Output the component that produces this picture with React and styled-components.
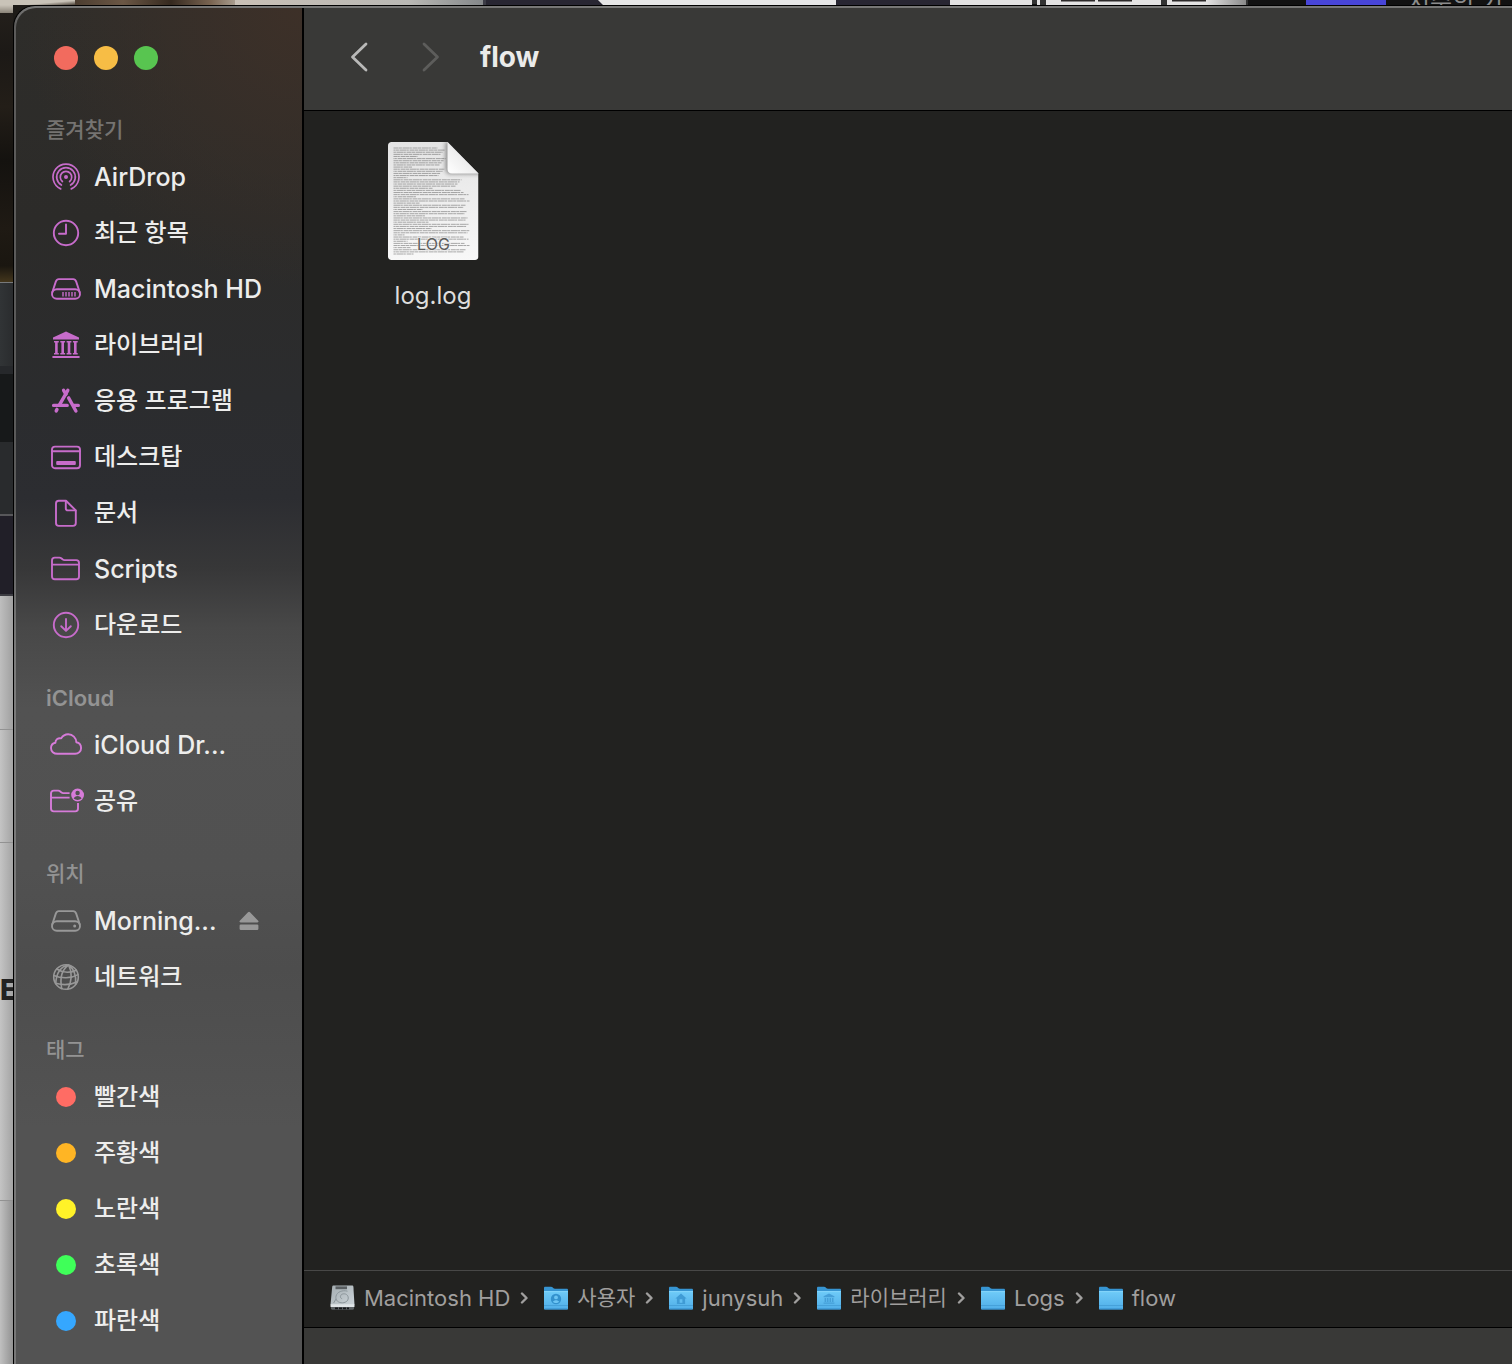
import React from "react";
import styled, { createGlobalStyle } from "styled-components";

const PURPLE = "#c76ccb";
const PINK = "#d67bd9";
const GREY = "#989898";

const GlobalStyle = createGlobalStyle`
  *, *::before, *::after { box-sizing: border-box; }
  body {
    margin: 0;
    background: #1b1916;
    font-family: Inter, "Noto Sans CJK KR", sans-serif;
    overflow: hidden;
  }
  ul, ol { list-style: none; margin: 0; padding: 0; }
  button { border: 0; padding: 0; background: none; font: inherit; color: inherit; }
  a { color: inherit; text-decoration: none; }
  svg { display: block; flex: none; }
`;

const Desktop = styled.div`
  display: grid;
  grid-template-columns: 13px minmax(0, 1fr);
  grid-template-rows: 5px minmax(0, 1fr);
  height: 100vh;
  background: linear-gradient(90deg, #1b1916, #3a3026 200px);
`;

/* Windows and wallpaper that stay visible behind the Finder window */
const TopEdge = styled.div`
  grid-column: 1 / -1;
  display: flex;
  overflow: hidden;
  background: #121212;
`;

const Strip = styled.div`
  flex: none;
  width: ${(p) => p.$w}px;
  height: ${(p) => p.$h || 5}px;
  background: ${(p) => p.$bg};
`;

const BackText = styled.div`
  margin-left: 22px;
  height: 5px;
  display: flex;
  align-items: flex-end;
  white-space: nowrap;
  font-size: 24px;
  line-height: 5px;
  color: #8c8c8c;
`;

const LeftEdge = styled.div`
  display: flex;
  flex-direction: column;
  overflow: hidden;
`;

const Slice = styled.div`
  flex: ${(p) => (p.$h ? "none" : "1")};
  height: ${(p) => (p.$h ? p.$h + "px" : "auto")};
  background: ${(p) => p.$bg};
  border-top: ${(p) => (p.$line ? `${p.$lineWidth || 1}px solid ${p.$line}` : "0")};
`;

const PageSlice = styled(Slice)`
  padding-top: ${(p) => p.$pad || 0}px;
  font-size: 28px;
  line-height: 36px;
  font-weight: 800;
  color: #222;
`;

const Window = styled.main`
  display: grid;
  grid-template-columns: 288px minmax(0, 1fr);
  min-height: 0;
  border: solid #000;
  border-width: 1px 0 0 1px;
  border-radius: 22px 0 0 0;
  overflow: hidden;
  background: linear-gradient(180deg, #787877, #5c5b5a 20px, #5a5a5a 500px, #7b7b7b 650px, #777);
  padding: 2px 0 0 2px;
`;

const Sidebar = styled.nav`
  display: flex;
  flex-direction: column;
  gap: 26px;
  min-height: 0;
  overflow: hidden;
  border-right: 2px solid #000;
  border-radius: 20px 0 0 0;
  background:
    radial-gradient(circle at 100% 0, #3d3028, rgba(61, 48, 40, 0) 280px),
    linear-gradient(180deg, #2e2d2a 0, #2c2b29 210px, #2b2c2e 390px, #2c2d31 490px, #373738 560px, #484848 620px, #525252 700px, #515151 860px, #4d4d4d 960px, #535353 1120px, #535353 100%);
`;

const SidebarTop = styled.div`
  margin-bottom: -26px;
  height: 103px;
  flex: none;
  display: flex;
  gap: 16px;
  padding: 38px 0 0 38px;
`;

const TrafficLight = styled.button`
  width: 24px;
  height: 24px;
  border-radius: 50%;
  background: ${(p) => p.$color};
`;

const SectionTitle = styled.h2`
  margin: 0;
  padding-left: 30px;
  font-size: ${(p) => (p.$hangul ? 21 : 22)}px;
  line-height: 38px;
  font-weight: ${(p) => (p.$hangul ? 500 : 600)};
  color: ${(p) => (p.$dim ? "#757371" : "#939393")};
`;

const Row = styled.li`
  display: flex;
  align-items: center;
  height: 56px;
  padding: 0 43px 0 32px;
`;

const RowLink = styled.a`
  flex: 1;
  display: flex;
  align-items: center;
  gap: 10px;
  height: 100%;
  white-space: nowrap;
  font-size: ${(p) => (p.$hangul ? 24 : 25)}px;
  font-weight: 500;
  line-height: 36px;
  color: #ededec;
`;

const IconSlot = styled.span`
  flex: none;
  display: grid;
  place-items: center;
  width: 36px;
  height: 36px;
  color: ${(p) => p.$color};
`;

const TagDot = styled.span`
  width: 20px;
  height: 20px;
  border-radius: 50%;
  background: ${(p) => p.$color};
`;

const EjectButton = styled.button`
  color: #989898;
`;

const Content = styled.section`
  display: flex;
  flex-direction: column;
  min-height: 0;
  background: #222220;
`;

const Toolbar = styled.header`
  flex: none;
  display: flex;
  align-items: center;
  gap: 27px;
  height: 103px;
  padding: 0 32px 4px;
  background: #393937;
  border-bottom: 1px solid #000;
`;

const NavButton = styled.button`
  display: grid;
  place-items: center;
  width: 45px;
  height: 40px;
  color: ${(p) => (p.disabled ? "#5d5d5b" : "#b9b9b8")};
`;

const Title = styled.h1`
  margin: 0;
  font-size: 28px;
  line-height: 36px;
  font-weight: 700;
  color: #ebebea;
`;

const Files = styled.div`
  flex: 1;
  min-height: 0;
  padding: 31px 38px;
`;

const File = styled.button`
  display: flex;
  flex-direction: column;
  align-items: center;
  gap: 19px;
  width: 182px;
  font-size: 24px;
  line-height: 32px;
  color: #dededd;
`;

const PathBar = styled.footer`
  flex: none;
  height: 57px;
  border-top: 1px solid #484847;
  padding: 0 26px;
`;

const PathList = styled.ol`
  display: flex;
  align-items: center;
  gap: 15px;
  height: 54px;
`;

const PathItem = styled.li`
  display: flex;
  align-items: center;
  gap: 10px;
  color: #a09f9e;
`;

const PathLink = styled.a`
  display: flex;
  align-items: center;
  gap: 8px;
  white-space: nowrap;
  font-size: ${(p) => (p.$hangul ? 21 : 22)}px;
  line-height: 32px;
`;

const StatusBar = styled.div`
  flex: none;
  height: 37px;
  border-top: 1px solid #000;
  background: #393937;
`;

const Glyph = ({ children }) => (
  <svg width="36" height="36" viewBox="0 0 36 36" fill="none" stroke="currentColor" strokeWidth="1.9" strokeLinecap="round" strokeLinejoin="round" aria-hidden="true">
    {children}
  </svg>
);

const DriveShell = () => (
  <>
    <path d="M4.300 21.300 7.800 10.600c.6-1.600 1.500-2.500 3-2.500h14.400c1.500 0 2.400.9 3 2.500l3.500 10.700" />
    <rect x="4" y="18.200" width="28" height="9.600" rx="4.800" />
  </>
);

const glyphs = {
  airdrop: (
    <Glyph>
      <path d="M12.700 29.900A13 13 0 1 1 23.300 29.900M13.400 26.100A9.300 9.300 0 1 1 22.600 26.100M14.400 22.500A5.700 5.700 0 1 1 21.600 22.500" strokeWidth="1.700" />
      <circle cx="18" cy="18" r="2" fill="currentColor" stroke="none" />
    </Glyph>
  ),
  recent: (
    <Glyph>
      <circle cx="18" cy="18" r="12.200" />
      <path d="M18 9.400v9.400h-7" />
    </Glyph>
  ),
  disk: (
    <Glyph>
      <DriveShell />
      <path d="M15 21v4.400M18 21v4.400M21 21v4.400M24 21v4.400M27 21v4.400" strokeWidth="1.400" strokeLinecap="butt" />
    </Glyph>
  ),
  library: (
    <Glyph>
      <g fill="currentColor" stroke="none">
        <path d="M18 4.400 31 10.600v1.900H5v-1.900z" />
        <rect x="4.400" y="29" width="27.200" height="2" rx=".6" />
        {[6.600, 12.900, 19.200, 25.500].map((x) => (
          <path key={x} d={`M${x - 0.6} 14h4.800v1.600h-1.100v10.300h1.100v1.600h-4.800v-1.600h1.100V15.600h-1.100z`} />
        ))}
      </g>
    </Glyph>
  ),
  apps: (
    <Glyph>
      <g strokeWidth="3.400">
        <path d="M19.800 7.300 11.600 21.600" />
        <path d="M15.600 7.300 18 11.400" />
        <path d="M20.600 14.900 27.900 28" />
        <path d="M5.600 22.400H19.200M25.600 22.400H30.300" />
        <path d="M9 26.400 8.200 27.900" />
      </g>
    </Glyph>
  ),
  desktop: (
    <Glyph>
      <rect x="4" y="7.600" width="28" height="21.600" rx="3" />
      <path d="M4 12.200h28" />
      <rect x="8.200" y="22" width="19.600" height="4" rx="1" fill="currentColor" stroke="none" />
    </Glyph>
  ),
  doc: (
    <Glyph>
      <path d="M18 5.700h-7.200c-1.800 0-2.800 1-2.800 2.800v19.600c0 1.800 1 2.800 2.800 2.800h14.200c1.800 0 2.800-1 2.800-2.800V15.400z" />
      <path d="M17.800 5.900v7.300c0 1.400.7 2.200 2.200 2.200h7.600" />
    </Glyph>
  ),
  folder: (
    <Glyph>
      <path d="M4 25.400V9.400c0-1.800 1-2.800 2.800-2.800h4.600c1 0 1.500.3 2.200.9l.9.800c.6.500 1.100.8 2.100.8h11.600c1.800 0 2.800 1 2.800 2.800v13.500c0 1.800-1 2.800-2.800 2.800H6.800c-1.800 0-2.800-1-2.800-2.800zM4 13.600h27" />
    </Glyph>
  ),
  download: (
    <Glyph>
      <circle cx="18" cy="18" r="12.200" />
      <path d="M18 12v11.600M13.200 19.200 18 23.900l4.800-4.700" />
    </Glyph>
  ),
  cloud: (
    <Glyph>
      <path d="M9.400 26.800c-3.800 0-6.400-2.400-6.400-5.700 0-2.800 1.800-4.900 4.400-5.400 0-3.100 2.800-5.200 5.800-4.300 1.500-2.600 4-4.100 7-4.100 4.500 0 8 3.400 8.100 8 2.900.6 4.800 2.900 4.800 5.700 0 3.300-2.600 5.800-6 5.800z" />
    </Glyph>
  ),
  shared: (
    <Glyph>
      <path d="M21.600 10.100h-6.300c-1 0-1.500-.3-2.100-.8l-.9-.8c-.7-.6-1.200-.9-2.200-.9H5.800C4 7.600 3 8.600 3 10.400v15.200c0 1.800 1 2.800 2.800 2.800h21.400c1.800 0 2.800-1 2.800-2.800v-5.500M3 14.600h18.600" strokeLinecap="butt" />
      <circle cx="29.600" cy="12" r="6.400" fill="currentColor" stroke="none" />
      <circle cx="29.600" cy="10" r="2.200" fill="#515151" stroke="none" />
      <path d="M25.700 15.600c.7-1.800 2-2.700 3.900-2.700s3.200.9 3.900 2.700c-2.300 1.900-5.500 1.900-7.800 0z" fill="#515151" stroke="none" />
    </Glyph>
  ),
  drive: (
    <Glyph>
      <DriveShell />
      <circle cx="26.700" cy="23" r="1.500" fill="currentColor" stroke="none" />
    </Glyph>
  ),
  network: (
    <Glyph>
      <g strokeWidth="1.600">
        <circle cx="18" cy="18" r="12.300" />
        <path d="M20.600 6C14.400 10.300 11.600 18.500 13.700 29.500M20.600 6C13.500 7.200 8.400 13.300 7.700 24.700M20.600 6c3.300 6.600 3.300 15.800-.8 24.200M20.600 6c5.200 3.700 7.900 9.900 7 19.500" />
        <path d="M8.800 10c5.300 3.500 12.400 4.400 19.500 1.200M5.800 16.400c7.500 3.300 17 3.300 24.300-.8M7.700 24.200c6.800 2 15.300 1.600 21.600-1.500" />
      </g>
    </Glyph>
  ),
};

const EjectIcon = () => (
  <svg width="20" height="20" viewBox="0 0 20 20" fill="currentColor" aria-hidden="true">
    <path d="M9 1.300c.6-.7 1.400-.7 2 0l8.200 8.400c.7.800.4 1.700-.7 1.700h-17c-1.100 0-1.400-.9-.7-1.700z" />
    <rect x=".6" y="13.600" width="18.800" height="5.400" rx="1.200" />
  </svg>
);

const Arrow = ({ forward }) => (
  <svg width="20" height="32" viewBox="0 0 20 32" fill="none" stroke="currentColor" strokeWidth="2.800" strokeLinecap="round" strokeLinejoin="round" aria-hidden="true">
    <path d={forward ? "M3 3 16.500 16 3 29" : "M17 3 3.500 16 17 29"} />
  </svg>
);

const PathChevron = () => (
  <svg width="8" height="12" viewBox="0 0 8 12" fill="none" stroke="currentColor" strokeWidth="2.400" strokeLinecap="round" strokeLinejoin="round" aria-hidden="true">
    <path d="M2 1.500 6.500 6 2 10.500" />
  </svg>
);

const DiskIcon = () => (
  <svg width="26" height="26" viewBox="0 0 26 26" aria-hidden="true">
    <defs>
      <linearGradient id="metal" x1="0" y1="0" x2="1" y2="1">
        <stop offset="0" stopColor="#a4adb1" />
        <stop offset="1" stopColor="#ccd4d9" />
      </linearGradient>
    </defs>
    <path d="M3.500.5h18.500c.8 0 1.300.5 1.400 1.200L24.500 20H.500L2.200 1.700C2.300 1 2.800.5 3.500.5z" fill="url(#metal)" />
    <rect x="5.500" y="1.400" width="11.500" height="2.800" fill="#5a5f62" />
    <path d="M17.500 6.200c-5-1.400-10.500.6-11.500 5-.9 4.300 2.700 6.800 6.500 6.600 4-.2 6.400-2.800 5.600-6-.7-2.700-3.800-3.700-6.200-2.500-2 1.200-2 4 .2 4.400M6 14 3.600 18" fill="none" stroke="#8c969b" strokeWidth="1" />
    <rect x=".500" y="19.200" width="24" height="3" rx=".8" fill="#e0e5e8" />
    <path d="M1 22h23v1.500c0 .7-.5 1.200-1.200 1.200H2.200c-.7 0-1.200-.5-1.200-1.200z" fill="#5c6164" />
    <path d="M5 23.400h14" stroke="#15171a" strokeWidth="1.800" strokeDasharray="3 1" />
  </svg>
);

const folderMarks = {
  user: (
    <>
      <circle cx="13" cy="14" r="5.200" fill="#3391cd" />
      <circle cx="13" cy="12.400" r="1.900" fill="#6cc4f3" />
      <path d="M9.800 16.800c1.200-2.200 5.200-2.200 6.400 0-1.600 1.700-4.800 1.700-6.400 0z" fill="#6cc4f3" />
    </>
  ),
  home: (
    <>
      <path d="M13 8.600 18.600 13.600h-1.500V19H8.900v-5.400H7.400z" fill="#3f9bd5" />
      <rect x="11.600" y="14.200" width="2.800" height="3.600" fill="#62bdf0" />
    </>
  ),
  library: (
    <path d="M13 8.600 18.400 11.300v1H7.600v-1zM8.600 13h1.600v4H8.600zM11 13h1.500v4H11zM13.500 13H15v4h-1.500zM15.900 13h1.600v4h-1.600zM7.600 17.600h10.800v1.200H7.600z" fill="#459fd8" />
  ),
};

const FolderIcon = ({ mark }) => (
  <svg width="26" height="26" viewBox="0 0 26 26" aria-hidden="true">
    <defs>
      <linearGradient id="folderFront" x1="0" y1="0" x2="0" y2="1">
        <stop offset="0" stopColor="#6fcbf8" />
        <stop offset="1" stopColor="#50aee8" />
      </linearGradient>
    </defs>
    <path d="M1 3c0-.8.5-1.300 1.300-1.300h5.800c.6 0 1 .2 1.400.6l1 .9c.4.300.8.500 1.400.5h11.800c.8 0 1.300.5 1.300 1.300V12H1z" fill="#3795d2" />
    <path d="M1 6.200h24v17.200c0 .7-.5 1.200-1.200 1.200H2.200c-.7 0-1.200-.5-1.200-1.200z" fill="url(#folderFront)" />
    <path d="M1 6.600h24" stroke="#8fdcff" strokeWidth=".8" />
    <path d="M1 20.500h24" stroke="#419cd6" strokeWidth=".8" />
    <path d="M1.500 24h23" stroke="#3288c4" strokeWidth="1" />
    {folderMarks[mark]}
  </svg>
);

/* Tiny rows of print on the document thumbnail */
const printRows = Array.from({ length: 51 }, (_, i) => {
  const top = i < 21;
  const full = top ? 44 + ((i * 7) % 9) : 70 + ((i * 5) % 7);
  const short = top ? i % 5 === 4 : i % 3 === 2;
  const width = short ? 10 + ((i * 11) % 30) : full;
  return { y: 6 + i * 2.12, width: !top || i < 14 || short ? width : width + 18, shift: i % 6 };
});

const LogFileIcon = () => (
  <svg width="92" height="119" viewBox="-0.5 0 92 119" aria-hidden="true">
    <defs>
      <linearGradient id="paper" x1="0" y1="0" x2="0" y2="1">
        <stop offset="0" stopColor="#e4e4e4" />
        <stop offset="1" stopColor="#f8f8f8" />
      </linearGradient>
      <linearGradient id="fold" x1="0" y1="1" x2=".6" y2=".4">
        <stop offset="0" stopColor="#ffffff" />
        <stop offset="1" stopColor="#e9e9e9" />
      </linearGradient>
      <filter id="foldShadow" x="-30%" y="-30%" width="160%" height="160%">
        <feGaussianBlur stdDeviation="2" />
      </filter>
      <clipPath id="page">
        <path d="M4 0h56l31 31.500V114.500c0 2-1.500 3.500-3.500 3.500H4c-2 0-3.500-1.500-3.500-3.500V3.500C.5 1.500 2 0 4 0z" />
      </clipPath>
    </defs>
    <g clipPath="url(#page)">
      <rect x="-1" width="94" height="119" fill="url(#paper)" />
      {printRows.map((row) => (
        <path
          key={row.y}
          d={`M6 ${row.y}h${row.width}`}
          stroke="#777"
          strokeOpacity=".62"
          strokeWidth="1"
          strokeDasharray="5 .4 3 .6 7 .3 2 .8"
          strokeDashoffset={row.shift * 3}
        />
      ))}
      <path d="M58 0v27c0 3 2 5 5 5h32V0z" fill="#000" opacity=".4" filter="url(#foldShadow)" />
    </g>
    <path d="M60 0v27c0 2.800 1.600 4.500 4.400 4.500H91z" fill="url(#fold)" />
    <text x="46" y="108" textAnchor="middle" fontFamily="Inter, sans-serif" fontSize="16" fill="#5e5e5e" stroke="#f0f0f0" strokeOpacity=".6" strokeWidth="2" paintOrder="stroke">
      LOG
    </text>
  </svg>
);

const sections = [
  {
    title: "즐겨찾기",
    dim: true,
    color: PURPLE,
    items: [
      { label: "AirDrop", icon: "airdrop" },
      { label: "최근 항목", icon: "recent" },
      { label: "Macintosh HD", icon: "disk" },
      { label: "라이브러리", icon: "library" },
      { label: "응용 프로그램", icon: "apps" },
      { label: "데스크탑", icon: "desktop" },
      { label: "문서", icon: "doc" },
      { label: "Scripts", icon: "folder" },
      { label: "다운로드", icon: "download" },
    ],
  },
  {
    title: "iCloud",
    color: PINK,
    items: [
      { label: "iCloud Dr...", icon: "cloud" },
      { label: "공유", icon: "shared" },
    ],
  },
  {
    title: "위치",
    color: GREY,
    items: [
      { label: "Morning...", icon: "drive", eject: true },
      { label: "네트워크", icon: "network" },
    ],
  },
  {
    title: "태그",
    items: [
      { label: "빨간색", tag: "#ff6c64" },
      { label: "주황색", tag: "#ffb524" },
      { label: "노란색", tag: "#fff228" },
      { label: "초록색", tag: "#3fff59" },
      { label: "파란색", tag: "#35a7ff" },
    ],
  },
];

const path = [
  { label: "Macintosh HD", disk: true },
  { label: "사용자", mark: "user" },
  { label: "junysuh", mark: "home" },
  { label: "라이브러리", mark: "library" },
  { label: "Logs" },
  { label: "flow" },
];

const isHangul = (text) => /[\uac00-\ud7a3]/.test(text);

const SidebarItem = ({ item, color }) => (
  <Row>
    <RowLink href="#" $hangul={isHangul(item.label)}>
      <IconSlot $color={color}>{item.tag ? <TagDot $color={item.tag} /> : glyphs[item.icon]}</IconSlot>
      {item.label}
    </RowLink>
    {item.eject && (
      <EjectButton type="button" aria-label="추출">
        <EjectIcon />
      </EjectButton>
    )}
  </Row>
);

export default function App() {
  return (
    <>
      <GlobalStyle />
      <Desktop>
        <TopEdge aria-hidden="true">
          <Strip $w={75} $bg="linear-gradient(175deg, #c9c3b8 60%, #4a4036)" />
          <Strip $w={160} $bg="linear-gradient(90deg, #4b3d30, #6b5745 30%, #35291f 60%, #7a6552 85%, #a89c8e)" />
          <Strip $w={248} $bg="linear-gradient(90deg, #c9c0b6, #b9b8b4 70%, #85888a)" />
          <Strip $w={3} $bg="#3c3c46" />
          <Strip $w={112} $bg="#282632" />
          <Strip $w={238} $bg="linear-gradient(45deg, #282632 3px, #e6e6e6 4px)" />
          <Strip $w={114} $bg="#282632" />
          <Strip $w={82} $bg="#e4e3e3" />
          <Strip $w={5} $h={4} $bg="#333" />
          <Strip $w={3} $bg="#e4e3e3" />
          <Strip $w={6} $bg="#333" />
          <Strip $w={15} $bg="#e4e3e3" />
          <Strip $w={34} $bg="linear-gradient(#2b2828 1px, #e4e3e3 2px)" />
          <Strip $w={3} $bg="#e4e3e3" />
          <Strip $w={34} $bg="linear-gradient(#2b2828 1px, #e4e3e3 2px)" />
          <Strip $w={29} $bg="#e4e3e3" />
          <Strip $w={6} $bg="#333" />
          <Strip $w={5} $bg="#e4e3e3" />
          <Strip $w={34} $bg="linear-gradient(#2b2828 1px, #e4e3e3 2px)" />
          <Strip $w={40} $bg="linear-gradient(90deg, #e4e3e3, #8a8a8a)" />
          <Strip $w={2} $bg="#333" />
          <Strip $w={58} $bg="#121212" />
          <Strip $w={80} $bg="#4845d8" />
          <BackText>시준의 기</BackText>
        </TopEdge>
        <LeftEdge aria-hidden="true">
          <Slice $h={8} $bg="linear-gradient(#c9c3b8, #8a8378)" />
          <Slice $h={269} $bg="linear-gradient(#231f1b, #1c1916 15%, #231e18 35%, #14120f 55%, #1f1a14 80%, #1a1610 94%, #43361c)" />
          <Slice $h={84} $line="#77797b" $bg="linear-gradient(90deg, #313436, #2a2c2e)" />
          <Slice $h={8} $bg="#26282b" />
          <Slice $h={68} $bg="#17191a" />
          <Slice $h={72} $bg="#292b2d" />
          <Slice $h={80} $line="#57575a" $lineWidth={2} $bg="#211f28" />
          <Slice $h={2} $bg="#3c3c42" />
          <Slice $h={133} $bg="linear-gradient(90deg, #bebebe, #a0a0a0)" />
          <Slice $h={113} $line="#929292" $bg="linear-gradient(90deg, #c4c4c4, #a4a4a4)" />
          <PageSlice $h={358} $pad={129} $line="#929292" $bg="linear-gradient(90deg, #c4c4c4, #a4a4a4)">
            E
          </PageSlice>
          <Slice $line="#929292" $bg="linear-gradient(90deg, #c0c0c0, #929292)" />
        </LeftEdge>
        <Window>
          <Sidebar aria-label="사이드바">
            <SidebarTop>
              <TrafficLight type="button" aria-label="닫기" $color="#f26b5e" />
              <TrafficLight type="button" aria-label="최소화" $color="#f7bd45" />
              <TrafficLight type="button" aria-label="확대" $color="#58c550" />
            </SidebarTop>
            {sections.map((section) => (
              <div key={section.title}>
                <SectionTitle $hangul={isHangul(section.title)} $dim={section.dim}>
                  {section.title}
                </SectionTitle>
                <ul>
                  {section.items.map((item) => (
                    <SidebarItem key={item.label} item={item} color={section.color} />
                  ))}
                </ul>
              </div>
            ))}
          </Sidebar>
          <Content>
            <Toolbar>
              <NavButton type="button" aria-label="뒤로">
                <Arrow />
              </NavButton>
              <NavButton type="button" aria-label="앞으로" disabled>
                <Arrow forward />
              </NavButton>
              <Title>flow</Title>
            </Toolbar>
            <Files>
              <File type="button">
                <LogFileIcon />
                <span>log.log</span>
              </File>
            </Files>
            <PathBar>
              <PathList>
                {path.map((step, i) => (
                  <PathItem key={step.label}>
                    <PathLink href="#" $hangul={isHangul(step.label)}>
                      {step.disk ? <DiskIcon /> : <FolderIcon mark={step.mark} />}
                      {step.label}
                    </PathLink>
                    {i < path.length - 1 && <PathChevron />}
                  </PathItem>
                ))}
              </PathList>
            </PathBar>
            <StatusBar />
          </Content>
        </Window>
      </Desktop>
    </>
  );
}
